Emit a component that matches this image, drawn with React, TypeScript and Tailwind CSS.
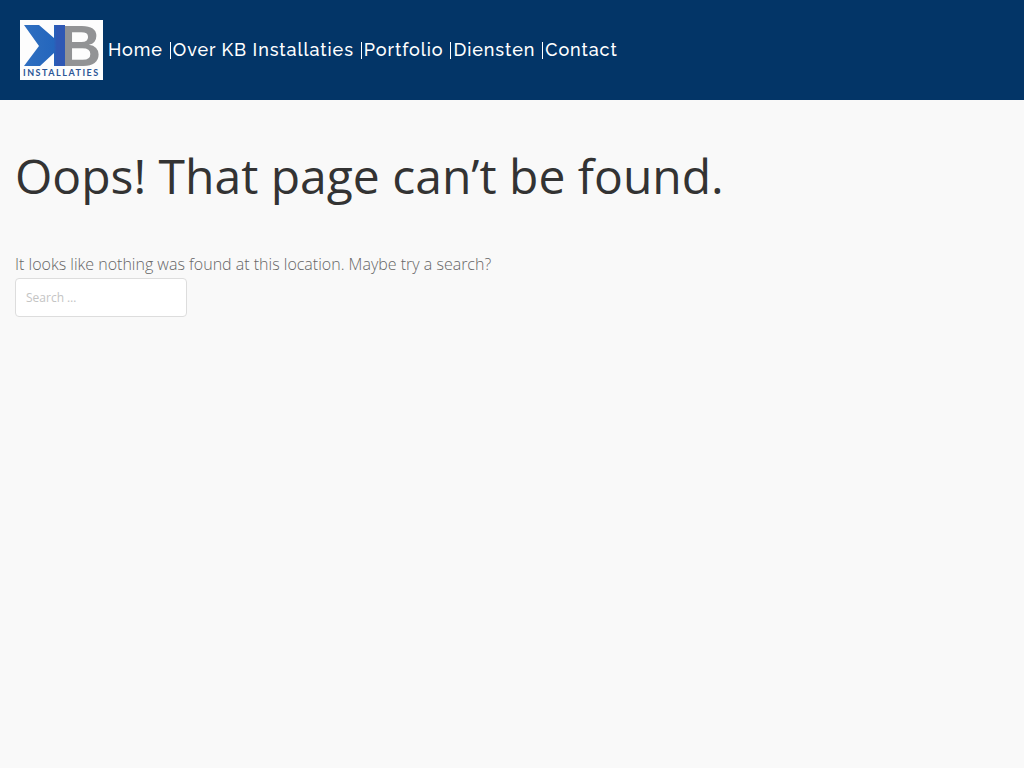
import React, { useState } from 'react';

const menuItems = [
    { label: 'Home', href: '#home' },
    { label: 'Over KB Installaties', href: '#over' },
    { label: 'Portfolio', href: '#portfolio' },
    { label: 'Diensten', href: '#diensten' },
    { label: 'Contact', href: '#contact' },
];

const Logo: React.FC = () => (
    <svg viewBox="0 0 83 60" className="block h-15 w-[83px] overflow-visible" role="img" aria-label="KB Installaties">
        <defs>
            <linearGradient id="blue" x1="0" y1="0" x2="1" y2="0">
                <stop offset="0" stopColor="#2f6fc0" />
                <stop offset="0.72" stopColor="#2466bd" />
                <stop offset="0.8" stopColor="#2f58b4" />
                <stop offset="1" stopColor="#2f58b4" />
            </linearGradient>
        </defs>
        <rect width="83" height="60" fill="#fdfdfd" />
        <text x="40" y="46" fontSize="57" fill="#929395" className="font-['Liberation_Sans'] font-bold">B</text>
        <path d="M4 5H19L34 18V5H45V46H34V33L20 46H4L19 26Z" fill="url(#blue)" />
        <text x="3" y="56" fontSize="9" fill="#2b5596" className="font-['Lato'] font-bold tracking-[1.5px]">INSTALLATIES</text>
    </svg>
);

const Header: React.FC = () => (
    <header className="flex items-center gap-[5px] bg-[#033567] p-5">
        <a href="#home"><Logo /></a>
        <nav>
            <ul className="flex flex-wrap font-['Raleway','Lato',sans-serif] text-lg leading-5 font-medium tracking-wider text-white">
                {menuItems.map((item, i) => (
                    <li key={item.href} className="flex items-center">
                        {i > 0 && <span className="mr-0.5 ml-[7px] h-[17px] w-px bg-white" />}
                        <a href={item.href}>{item.label}</a>
                    </li>
                ))}
            </ul>
        </nav>
    </header>
);

const App: React.FC = () => {
    const [query, setQuery] = useState('');

    return (
        <div className="min-h-screen bg-[#f9f9f9] font-['Open_Sans',sans-serif]">
            <Header />
            <main className="px-[15px] pt-12">
                <h1 className="text-5xl leading-14 text-[#333333]">Oops! That page can’t be found.</h1>
                <p className="mt-12 text-base leading-6 font-light text-[#666666]">
                    It looks like nothing was found at this location. Maybe try a search?
                </p>
                <form role="search" className="mt-0.5" onSubmit={e => e.preventDefault()}>
                    <input
                        type="search"
                        aria-label="Search for:"
                        value={query}
                        onChange={e => setQuery(e.target.value)}
                        placeholder="Search …"
                        className="block h-[39px] w-[172px] rounded-sm border border-[#dddddd] bg-white px-2.5 text-xs text-[#666666] placeholder:text-[#c4c4c4]"
                    />
                </form>
            </main>
        </div>
    );
};

export default App;
